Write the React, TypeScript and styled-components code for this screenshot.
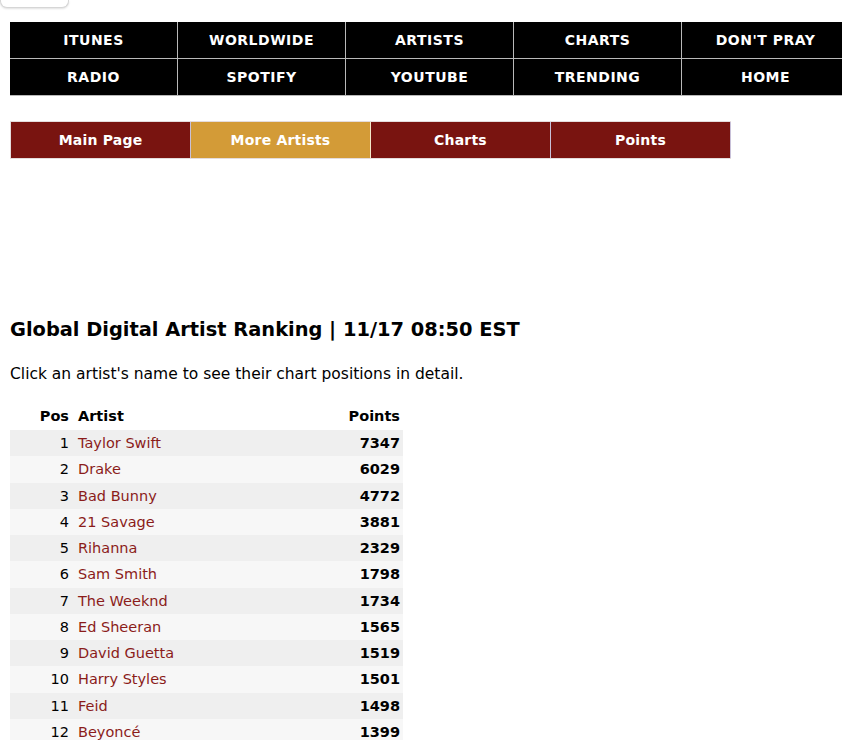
import styled, { createGlobalStyle } from "styled-components";

const GlobalStyle = createGlobalStyle`
  html, body {
    margin: 0;
    padding: 0;
    overflow: hidden;
    background: #fff;
  }
  body {
    font-family: "DejaVu Sans", Verdana, sans-serif;
    color: #000;
  }
`;

const Page = styled.div`
  width: 842px;
  overflow: hidden;
`;

const TopButton = styled.div`
  width: 67px;
  height: 7px;
  border: 1px solid #d6d6d6;
  border-top: none;
  border-radius: 0 0 7px 7px;
  box-shadow: 0 1px 2px rgba(0, 0, 0, 0.12);
  background: #fff;
`;

const MainNav = styled.div`
  display: grid;
  grid-template-columns: repeat(5, 167px);
  grid-auto-rows: 36px;
  gap: 1px;
  width: max-content;
  margin: 14px 0 0 10px;
  background: #b9b9b9;
  border: 1px solid #b9b9b9;
  border-left: none;
  border-top: none;
`;

const MainNavItem = styled.a`
  display: flex;
  align-items: center;
  justify-content: center;
  background: #000;
  color: #fff;
  font-weight: bold;
  font-size: 14px;
  letter-spacing: 0.5px;
  text-decoration: none;
`;

const SubNav = styled.div`
  display: grid;
  grid-template-columns: repeat(4, 180px);
  height: 36px;
  width: max-content;
  margin: 25px 0 0 10px;
  border: 1px solid #e4dcdc;
  border-right: none;
`;

const SubNavItem = styled.a<{ $active?: boolean }>`
  display: flex;
  align-items: center;
  justify-content: center;
  background: ${(p) => (p.$active ? "#d39b37" : "#791410")};
  color: #fff;
  font-weight: bold;
  font-size: 14px;
  letter-spacing: 0.2px;
  text-decoration: none;
  border-right: 1px solid ${(p) => (p.$active ? "#f3e6c9" : "#c8c0d8")};
`;

const Content = styled.div`
  padding: 0 10px;
`;

const Heading = styled.h2`
  margin: 159px 0 0;
  font-size: 19.4px;
  line-height: 24px;
  font-weight: bold;
`;

const Intro = styled.p`
  margin: 22px 0 0;
  font-size: 15.5px;
  line-height: 20px;
`;

const Ranking = styled.div`
  display: grid;
  grid-template-columns: 62px 1fr 90px;
  width: 393px;
  margin-top: 23px;
  font-size: 14.5px;
`;

const HeaderCell = styled.div<{ $align?: string }>`
  height: 23px;
  line-height: 19px;
  font-weight: bold;
  text-align: ${(p) => p.$align || "left"};
  padding: 0 3px 0 6px;
`;

const Row = styled.div<{ $odd: boolean }>`
  display: contents;
  & > * {
    background: ${(p) => (p.$odd ? "#efefef" : "#f7f7f7")};
  }
`;

const Cell = styled.div<{ $align?: string; $bold?: boolean }>`
  height: 26.25px;
  line-height: 26.25px;
  text-align: ${(p) => p.$align || "left"};
  font-weight: ${(p) => (p.$bold ? "bold" : "normal")};
  padding: 0 3px 0 6px;
`;

const ArtistLink = styled.a`
  color: #8b1c1a;
  text-decoration: none;
`;

const topLinks = [
  "ITUNES",
  "WORLDWIDE",
  "ARTISTS",
  "CHARTS",
  "DON'T PRAY",
  "RADIO",
  "SPOTIFY",
  "YOUTUBE",
  "TRENDING",
  "HOME",
];

const subLinks = ["Main Page", "More Artists", "Charts", "Points"];

const artists: [string, number][] = [
  ["Taylor Swift", 7347],
  ["Drake", 6029],
  ["Bad Bunny", 4772],
  ["21 Savage", 3881],
  ["Rihanna", 2329],
  ["Sam Smith", 1798],
  ["The Weeknd", 1734],
  ["Ed Sheeran", 1565],
  ["David Guetta", 1519],
  ["Harry Styles", 1501],
  ["Feid", 1498],
  ["Beyoncé", 1399],
];

export default function App() {
  return (
    <Page>
      <GlobalStyle />
      <TopButton />
      <MainNav>
        {topLinks.map((l) => (
          <MainNavItem key={l} href="#">
            {l}
          </MainNavItem>
        ))}
      </MainNav>
      <SubNav>
        {subLinks.map((l) => (
          <SubNavItem key={l} href="#" $active={l === "More Artists"}>
            {l}
          </SubNavItem>
        ))}
      </SubNav>
      <Content>
        <Heading>Global Digital Artist Ranking | 11/17 08:50 EST</Heading>
        <Intro>Click an artist's name to see their chart positions in detail.</Intro>
        <Ranking>
          <HeaderCell $align="right">Pos</HeaderCell>
          <HeaderCell>Artist</HeaderCell>
          <HeaderCell $align="right">Points</HeaderCell>
          {artists.map(([name, pts], i) => (
            <Row key={name} $odd={i % 2 === 0}>
              <Cell $align="right">{i + 1}</Cell>
              <Cell>
                <ArtistLink href="#">{name}</ArtistLink>
              </Cell>
              <Cell $align="right" $bold>
                {pts}
              </Cell>
            </Row>
          ))}
        </Ranking>
      </Content>
    </Page>
  );
}
